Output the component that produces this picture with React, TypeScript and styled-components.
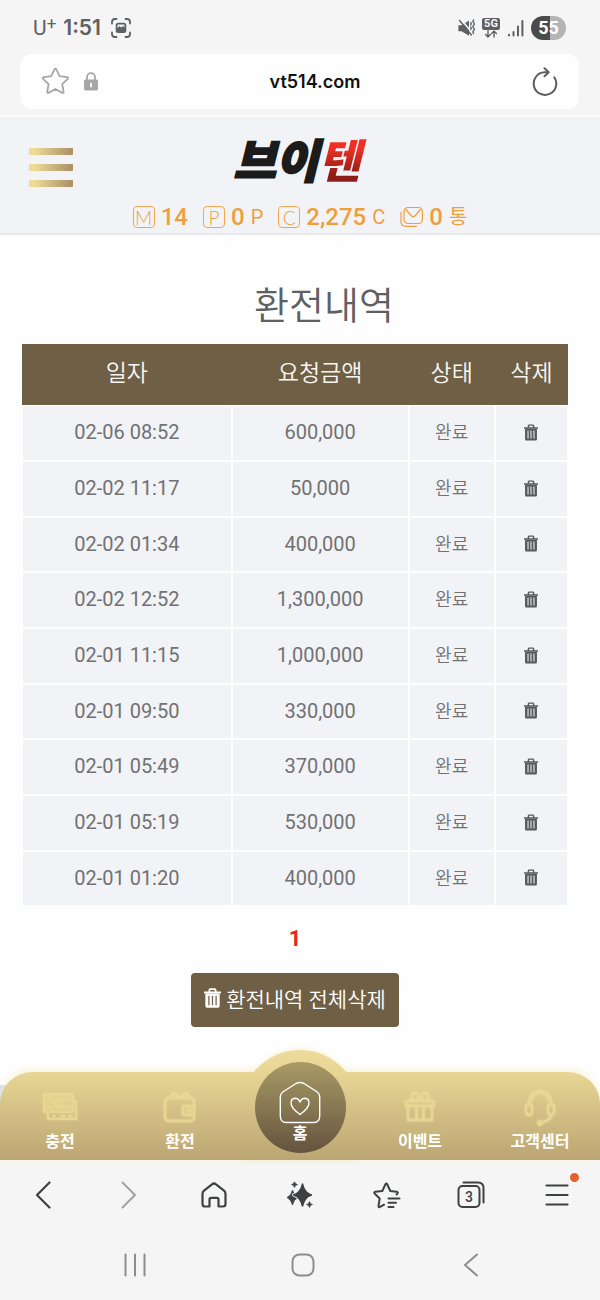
import React from "react";
import styled, { createGlobalStyle, css } from "styled-components";

const sans = `Roboto, "Noto Sans CJK KR", sans-serif`;

const GlobalStyle = createGlobalStyle`
  *, *::before, *::after { box-sizing: border-box; }
  body { margin: 0; background: #f5f5f5; font-family: ${sans}; color: #707173; }
  button { padding: 0; border: 0; background: none; font: inherit; color: inherit; cursor: pointer; }
  a { color: inherit; text-decoration: none; }
  h1, p { margin: 0; }
  svg { display: block; }
`;

const Screen = styled.div`
  display: flex;
  flex-direction: column;
  min-height: 100vh;
`;

/* ---------- phone status bar ---------- */

const StatusBar = styled.div`
  display: flex;
  align-items: center;
  justify-content: space-between;
  height: 54px;
  padding: 2px 34px 0 33px;
  color: #5f6062;
`;

const StatusGroup = styled.div<{ $gap: number }>`
  display: flex;
  align-items: center;
  gap: ${(p) => p.$gap}px;
`;

const Carrier = styled.span`
  display: flex;
  font: 400 21px/24px Roboto, sans-serif;
`;

const CarrierPlus = styled.span`
  font: 400 17px/14px Roboto, sans-serif;
`;

const Clock = styled.time`
  margin-right: 3px;
  font: 600 21px/24px Inter, sans-serif;
`;

const Battery = styled.span`
  display: grid;
  place-items: center;
  width: 35px;
  height: 24px;
  border-radius: 12px;
  background: linear-gradient(90deg, #4b4b4b 55%, #b4b4b4 55%);
  color: #fff;
  font: 700 18px/24px Roboto, sans-serif;
`;

/* ---------- address bar ---------- */

const AddressBar = styled.div`
  display: flex;
  align-items: center;
  height: 55px;
  margin: 0 21px 6px 20px;
  padding: 0 21px;
  border-radius: 12px;
  background: #fefefe;
`;

const AddressTools = styled.div`
  display: flex;
  align-items: center;
  gap: 14px;
  color: #a6a6a8;
`;

const Url = styled.span`
  flex: 1;
  color: #111;
  font: 600 18px/24px Inter, sans-serif;
  text-align: center;
`;

/* ---------- site header ---------- */

const SiteHeader = styled.header`
  padding: 20px 29px 2px;
  border-top: 2px solid #fbfbfb;
  border-bottom: 2px solid #e9eaec;
  background: #f2f3f6;
`;

const Brand = styled.div`
  display: grid;
  grid-template-columns: 1fr auto 1fr;
  align-items: start;
  height: 66px;
`;

const MenuButton = styled.button`
  display: flex;
  flex-direction: column;
  gap: 9px;
  width: 44px;
  margin-top: 11px;
`;

const MenuBar = styled.span`
  height: 7px;
  border-radius: 1px;
  background: linear-gradient(90deg, #efdb98 10%, #a98f66);
`;

const Logo = styled.a`
  padding-right: 6px;
  color: #1b1b1b;
  font: italic 900 46px/42px "Noto Sans CJK KR", sans-serif;
  -webkit-text-stroke: 2px #1b1b1b;
`;

const LogoAccent = styled.span`
  padding-right: 10px;
  margin-right: -10px;
  background: linear-gradient(#ee3124 35%, #8f1d17 75%);
  background-clip: text;
  color: transparent;
  -webkit-text-stroke: 0;
`;

const Stats = styled.ul`
  display: flex;
  justify-content: center;
  gap: 15px;
  margin: 0;
  padding: 0;
  list-style: none;
  color: #ee9f3c;
`;

const Stat = styled.li`
  display: flex;
  align-items: center;
  gap: 6px;
  height: 28px;
`;

const Badge = styled.span`
  width: 22px;
  height: 22px;
  border: 1px solid #f0a850;
  border-radius: 4px;
  font: 300 19px/21px Lato, sans-serif;
  text-align: center;
`;

const StatValue = styled.b`
  font-size: 24px;
  font-weight: 500;
  line-height: 28px;
`;

const StatUnit = styled.span`
  font-size: 20px;
  line-height: 28px;
`;

/* ---------- withdrawal history ---------- */

const Main = styled.main`
  display: flex;
  flex: 1;
  flex-direction: column;
  align-items: center;
  padding: 43px 32px 45px 22px;
  background: #fefefe;
`;

const Title = styled.h1`
  padding-left: 58px;
  color: #5f6062;
  font-size: 38px;
  font-weight: 350;
  line-height: 56px;
`;

const History = styled.table`
  width: 100%;
  margin-top: 10px;
  border-collapse: separate;
  border-spacing: 0;
  table-layout: fixed;
`;

const Col = styled.col<{ $share: number }>`
  width: ${(p) => p.$share}%;
`;

const HeadCell = styled.th`
  height: 61px;
  padding: 0 0 8px;
  background: #6f5f45;
  color: #f8f6f2;
  font-size: 23px;
  font-weight: 350;
`;

const Row = styled.tr`
  height: 56px;
  &:nth-child(3n) { height: 55px; }
`;

const Cell = styled.td<{ $small?: boolean }>`
  padding: ${(p) => (p.$small ? 0 : "0 0 2px")};
  border: 1px solid #fefefe;
  background: #f2f3f6;
  font-size: ${(p) => (p.$small ? 18 : 20)}px;
  font-weight: ${(p) => (p.$small ? 350 : 400)};
  line-height: 24px;
  text-align: center;
`;

const RowDelete = styled.button`
  display: block;
  margin: 0 auto;
  color: #58595b;
`;

const Pager = styled.nav`
  margin-top: 19px;
  color: #e8281e;
  font-size: 22px;
  font-weight: 700;
  line-height: 28px;
`;

const DeleteAll = styled.button`
  display: flex;
  align-items: center;
  gap: 5px;
  height: 54px;
  margin-top: 20px;
  padding: 0 13px 4px;
  border-radius: 4px;
  background: #6f5f45;
  color: #fff;
  font-size: 21px;
  font-weight: 350;
`;

/* ---------- site tab bar ---------- */

const barCorners = "32px 32px 0 0";

const TabArea = styled.div`
  position: relative;
  z-index: 0;
  background: linear-gradient(#cddbe3, #cddbe3) 0 13px / 24px 100% no-repeat, #fefefe;

  &::before {
    content: "";
    position: absolute;
    z-index: -2;
    inset: 0;
    border-radius: ${barCorners};
    box-shadow: 0 -2px 8px #f8f1d8;
  }
`;

const Bulge = styled.div`
  position: absolute;
  z-index: -1;
  top: -22px;
  left: 50%;
  width: 118px;
  height: 110px;
  margin-left: -59px;
  border-radius: 59px 59px 0 0;
  background: linear-gradient(#eedb9b, #e8d695 22px);
  box-shadow: 0 0 6px #f6edcb;
`;

const TabBar = styled.nav`
  display: grid;
  grid-template-columns: repeat(5, 1fr);
  height: 88px;
  border-radius: ${barCorners};
  background: linear-gradient(#e8d695, #bba573);
`;

const Tab = styled.a`
  display: flex;
  flex-direction: column;
  align-items: center;
  gap: 4px;
  padding-top: 16px;
  color: #fff;
  font-size: 16px;
  font-weight: 700;
  line-height: 24px;
`;

const TabIcon = styled.span`
  display: grid;
  place-items: center;
  height: 38px;
  color: #ebda96;
  filter: drop-shadow(0 0 1px #ebda96);
  opacity: 0.85;
`;

const HomeTab = styled.a`
  justify-self: center;
  display: flex;
  flex-direction: column;
  align-items: center;
  width: 91px;
  height: 91px;
  margin-top: -10px;
  padding-top: 19px;
  border-radius: 50%;
  background: linear-gradient(#a99b66, #65533e);
  color: #fff;
  font-size: 16px;
  font-weight: 700;
  line-height: 18px;
`;

/* ---------- browser and system bars ---------- */

const barItem = css`
  display: grid;
  place-items: center;
`;

const BrowserBar = styled.div`
  display: grid;
  grid-template-columns: repeat(7, 1fr);
  height: 70px;
  color: #3f4042;
`;

const BrowserButton = styled.button<{ $dim?: boolean }>`
  ${barItem}
  color: ${(p) => (p.$dim ? "#a2a2a3" : "inherit")};
`;

const SystemBar = styled.div`
  display: grid;
  grid-template-columns: repeat(3, 1fr);
  height: 70px;
  padding: 0 45px 0 51px;
  color: #8d8d8e;
`;

const SystemButton = styled.button`
  ${barItem}
`;

/* ---------- icons ---------- */

type IconProps = { w: number; h: number; sw?: number; children: React.ReactNode };

const Icon = ({ w, h, sw = 2, children }: IconProps) => (
  <svg
    width={w}
    height={h}
    viewBox={`0 0 ${w} ${h}`}
    fill="none"
    stroke="currentColor"
    strokeWidth={sw}
    strokeLinecap="round"
    strokeLinejoin="round"
    aria-hidden="true"
  >
    {children}
  </svg>
);

const Trash = ({ size }: { size: number }) => (
  <svg width={size} height={size + 3} viewBox="0 0 16 19" fill="currentColor" aria-hidden="true">
    <path d="M4.200 3.400V2Q4.200 .3 5.900 .3h4.200q1.700 0 1.700 1.700v1.400H16v1.900H0V3.400zM5.900 3.400h4.200V1.900H5.900z" fillRule="evenodd" />
    <path
      d="M1.200 5.300h13.600v11.900q0 1.500-1.500 1.500H2.700q-1.500 0-1.500-1.500zM4 7.300v9h1.200v-9zM7.400 7.300v9h1.200v-9zM10.800 7.300v9H12v-9z"
      fillRule="evenodd"
    />
  </svg>
);

const CaptureIcon = () => (
  <Icon w={20} h={20} sw={1.8}>
    <path d="M1 5.500V4q0-3 3-3h1.500M14.500 1H16q3 0 3 3v1.500M19 14.500V16q0 3-3 3h-1.500M5.500 19H4q-3 0-3-3v-1.500" />
    <rect x="5.600" y="5.600" width="8.800" height="8.600" rx="1.600" />
    <path d="M6 10.500l2.500-2.500 1.600 1.500 2-1.500 2.300 2.200V14H6z" fill="currentColor" stroke="none" />
  </Icon>
);

const MuteIcon = () => (
  <Icon w={17} h={18} sw={1.4}>
    <path d="M.4 6.200h3.200L11 1.500V16.800l-7.400-4.600H.4z" fill="currentColor" stroke="none" />
    <path d="M3.500 1l10 12" stroke="#f5f5f5" strokeWidth="1.600" />
    <path d="M1.500 1.500L13.500 16" />
    <path d="M12.800 3.500q1 1.200 0 2.400M15.600 1q-1.400 1.300 0 2.600t0 2.700 0 2.700 0 2.700 0 2.700M12.800 8q1 1.200 0 2.400" />
  </Icon>
);

const FiveG = styled.span`
  display: flex;
  flex-direction: column;
  align-items: center;
  width: 18px;
`;

const FiveGLabel = styled.span`
  width: 18px;
  border-radius: 2px;
  background: #5f6062;
  color: #f5f5f5;
  font: 700 11px/12px Roboto, sans-serif;
  text-align: center;
`;

const SignalIcon = () => (
  <Icon w={17} h={18}>
    <path d="M2 16.400v-.6M6.500 16.400v-3.400" />
    <path d="M11 16.400V7.500" />
    <path d="M15.400 16.400V2" />
  </Icon>
);

const StarIcon = () => (
  <Icon w={29} h={29} sw={1.8}>
    <path d="M13.400 2.600q1-2 2 0l3.200 6.600 7.300 1q2.100.4.6 2l-5.300 5 1.300 7.300q.3 2.100-1.600 1.100L14.400 22l-6.500 3.600q-1.900 1-1.600-1.100l1.300-7.300-5.300-5q-1.500-1.600.6-2l7.300-1z" />
  </Icon>
);

const LockIcon = () => (
  <Icon w={14} h={19} sw={1.8}>
    <path d="M3 8V5.200a4 4 0 0 1 8 0V8" />
    <rect x="0" y="7.600" width="14" height="10.800" rx="1.600" fill="currentColor" stroke="none" />
    <path d="M7 11.600v3" stroke="#fefefe" />
  </Icon>
);

const ReloadIcon = () => (
  <Icon w={26} h={30} sw={2}>
    <path d="M16 5.300H12.500A11.300 11.300 0 1 0 22.300 10.200" stroke="#5c5d5f" />
    <path d="M12.500 1.300l4.200 4-4.200 4" stroke="#5c5d5f" />
  </Icon>
);

const MailIcon = () => (
  <Icon w={23} h={22} sw={1.2}>
    <rect x="4" y="1.500" width="18.400" height="16" rx="4" />
    <path d="M6 3.500l5 6q2.200 2.200 4.400 0l5-6" />
    <path d="M1 6v9.500q0 4.800 4.800 4.800h10.700" />
  </Icon>
);

const CashIcon = () => (
  <Icon w={36} h={28} sw={2}>
    <rect x="2" y="1" width="29" height="18" rx="1" fill="currentColor" fillOpacity=".35" />
    <path d="M5 7q3-.5 4-3M24 4q1 2.500 4 3M5 13q3 .5 4 3M24 16q1-2.500 4-3M31 8h3v18H6v-7" />
    <circle cx="16.500" cy="10" r="4.500" />
    <path d="M16.500 8v4M11 23h2M19 23h4M27 23h3" />
  </Icon>
);

const WalletIcon = () => (
  <Icon w={34} h={32} sw={2.4}>
    <rect x="2" y="7" width="29" height="23" rx="4" />
    <path d="M7 6l4-4 6 4 6-4 4 4" />
    <path d="M31 15H21q-1 0-1 1v7q0 1 1 1h10" />
    <rect x="24" y="18" width="4" height="3" strokeWidth="1.500" />
  </Icon>
);

const GiftIcon = () => (
  <Icon w={32} h={32} sw={2.4}>
    <rect x="2" y="10" width="28" height="5" />
    <path d="M4 15v14h24V15M12.500 15v14M19.500 15v14" />
    <circle cx="11" cy="5.500" r="3.600" />
    <circle cx="21" cy="5.500" r="3.600" />
  </Icon>
);

const HeadsetIcon = () => (
  <Icon w={32} h={38} sw={2.4}>
    <path d="M5 16v-2a11 11 0 0 1 22 0v2" />
    <path d="M8 13a8 8 0 0 1 16 0" strokeWidth="1.500" />
    <rect x="2" y="16" width="6" height="11" rx="3" />
    <rect x="24" y="16" width="6" height="11" rx="3" />
    <path d="M27 27q0 5-9 7.500" />
    <circle cx="16" cy="35" r="1.800" fill="currentColor" />
  </Icon>
);

const HomeHeartIcon = () => (
  <Icon w={44} h={44} sw={1.4}>
    <path d="M18 2.500q4-2 8 0l12.500 8q3.200 2 3.200 6V35q0 6.500-6 6.500H8.300q-6 0-6-6.500V16.500q0-4 3.200-6z" />
    <path d="M22 33.500q-9-6.500-9-11.500 0-4.500 4-4.800 3.500 0 5 3.800 1.500-3.800 5-3.800 4 .3 4 4.800 0 5-9 11.500z" />
  </Icon>
);

const SparkleIcon = () => (
  <svg width="28" height="28" viewBox="0 0 28 28" fill="currentColor" strokeLinejoin="round" aria-hidden="true">
    <path d="M6.500 9Q7.500 14.500 12 16.500 7.500 18.500 6.500 24 5.200 18.500 1 16.500 5.500 14.500 6.500 9z" stroke="currentColor" strokeWidth=".8" />
    <path d="M16.500 3Q18.500 12 25.500 14 18.500 16 16.500 25 14.500 16 7.500 14 14.500 12 16.500 3z" stroke="#f5f5f5" strokeWidth="3" />
    <path d="M16.500 3Q18.500 12 25.500 14 18.500 16 16.500 25 14.500 16 7.500 14 14.500 12 16.500 3z" stroke="currentColor" strokeWidth="1.400" />
    <path d="M8.500 .8Q9 3 11.500 3.600 9 4.200 8.500 6.600 8 4.200 5.500 3.600 8 3 8.500 .8zM23.500 20.500Q24 23 26.500 23.500 24 24 23.500 26.500 23 24 20.500 23.500 23 23 23.500 20.500z" stroke="currentColor" strokeWidth=".6" />
  </svg>
);

const BookmarksIcon = () => (
  <Icon w={30} h={28} sw={2}>
    <path d="M25.500 13.500l.8-.8q1.300-1.500-.7-1.900l-6.300-.8-3-6.500q-1-1.800-2 0l-3 6.500-6.900.8q-2 .4-.6 1.900l4.900 4.800-1.200 7.300q-.2 2 1.600 1.100l4-2.200" />
    <path d="M17.500 17.500h11M17.500 21.800h7.500M17.500 26h5" />
  </Icon>
);

const TabsIcon = () => (
  <svg width="28" height="28" viewBox="0 0 28 28" fill="none" stroke="currentColor" strokeWidth="2" aria-hidden="true">
    <rect x="1.500" y="5" width="21" height="21" rx="4" />
    <path d="M6.500 1.500H21q5.500 0 5.500 5.500v14.500" strokeLinecap="round" />
    <text x="12" y="20.500" textAnchor="middle" fill="currentColor" stroke="none" fontFamily="Roboto, sans-serif" fontWeight="500" fontSize="14">
      3
    </text>
  </svg>
);

const MenuIconBox = styled.span`
  position: relative;
`;

const NoticeDot = styled.span`
  position: absolute;
  top: -11px;
  right: -10px;
  width: 9px;
  height: 9px;
  border-radius: 50%;
  background: #e0642c;
`;

/* ---------- data ---------- */

const withdrawals = [
  ["02-06 08:52", "600,000"],
  ["02-02 11:17", "50,000"],
  ["02-02 01:34", "400,000"],
  ["02-02 12:52", "1,300,000"],
  ["02-01 11:15", "1,000,000"],
  ["02-01 09:50", "330,000"],
  ["02-01 05:49", "370,000"],
  ["02-01 05:19", "530,000"],
  ["02-01 01:20", "400,000"],
];

export default function App() {
  return (
    <Screen>
      <GlobalStyle />
      <StatusBar>
        <StatusGroup $gap={7}>
          <Carrier>
            U<CarrierPlus>+</CarrierPlus>
          </Carrier>
          <Clock>1:51</Clock>
          <CaptureIcon />
        </StatusGroup>
        <StatusGroup $gap={7}>
          <MuteIcon />
          <FiveG>
            <FiveGLabel>5G</FiveGLabel>
            <Icon w={14} h={8} sw={1.4}>
              <path d="M4 .7v6M1.600 4.600L4 7l2.400-2.400M10 7V1M7.600 3.400L10 1l2.400 2.400" />
            </Icon>
          </FiveG>
          <SignalIcon />
          <Battery>55</Battery>
        </StatusGroup>
      </StatusBar>

      <AddressBar>
        <AddressTools>
          <button aria-label="Add bookmark"><StarIcon /></button>
          <LockIcon />
        </AddressTools>
        <Url>vt514.com</Url>
        <AddressTools>
          <button aria-label="Reload"><ReloadIcon /></button>
        </AddressTools>
      </AddressBar>

      <SiteHeader>
        <Brand>
          <MenuButton aria-label="메뉴">
            <MenuBar />
            <MenuBar />
            <MenuBar />
          </MenuButton>
          <Logo href="#">
            브이<LogoAccent>텐</LogoAccent>
          </Logo>
        </Brand>
        <Stats>
          <Stat><Badge>M</Badge><StatValue>14</StatValue></Stat>
          <Stat><Badge>P</Badge><StatValue>0</StatValue><StatUnit>P</StatUnit></Stat>
          <Stat><Badge>C</Badge><StatValue>2,275</StatValue><StatUnit>C</StatUnit></Stat>
          <Stat><MailIcon /><StatValue>0</StatValue><StatUnit>통</StatUnit></Stat>
        </Stats>
      </SiteHeader>

      <Main>
        <Title>환전내역</Title>
        <History>
          <colgroup>
            <Col $share={38.4} />
            <Col $share={32.4} />
            <Col $share={15.8} />
            <Col $share={13.4} />
          </colgroup>
          <thead>
            <tr>
              <HeadCell scope="col">일자</HeadCell>
              <HeadCell scope="col">요청금액</HeadCell>
              <HeadCell scope="col">상태</HeadCell>
              <HeadCell scope="col">삭제</HeadCell>
            </tr>
          </thead>
          <tbody>
            {withdrawals.map(([date, amount]) => (
              <Row key={date}>
                <Cell>{date}</Cell>
                <Cell>{amount}</Cell>
                <Cell $small>완료</Cell>
                <Cell>
                  <RowDelete aria-label="삭제"><Trash size={14} /></RowDelete>
                </Cell>
              </Row>
            ))}
          </tbody>
        </History>
        <Pager>
          <a href="#" aria-current="page">1</a>
        </Pager>
        <DeleteAll>
          <Trash size={17} />
          환전내역 전체삭제
        </DeleteAll>
      </Main>

      <TabArea>
        <Bulge />
        <TabBar>
          <Tab href="#"><TabIcon><CashIcon /></TabIcon>충전</Tab>
          <Tab href="#"><TabIcon><WalletIcon /></TabIcon>환전</Tab>
          <HomeTab href="#"><HomeHeartIcon />홈</HomeTab>
          <Tab href="#"><TabIcon><GiftIcon /></TabIcon>이벤트</Tab>
          <Tab href="#"><TabIcon><HeadsetIcon /></TabIcon>고객센터</Tab>
        </TabBar>
      </TabArea>

      <BrowserBar>
        <BrowserButton aria-label="Back">
          <Icon w={16} h={28} sw={2.2}><path d="M14.500 1.500L2 14l12.500 12.500" /></Icon>
        </BrowserButton>
        <BrowserButton aria-label="Forward" $dim>
          <Icon w={16} h={28} sw={2}><path d="M1.500 1.500L14 14 1.500 26.500" /></Icon>
        </BrowserButton>
        <BrowserButton aria-label="Home">
          <Icon w={26} h={28} sw={2.2}>
            <path d="M11.300 3.200q1.700-1.400 3.400 0l8.300 6.500q1.500 1.200 1.500 3.200V23q0 2.500-2.500 2.500h-4.500v-7q0-1.700-1.700-1.700h-5.600q-1.700 0-1.700 1.700v7H4q-2.500 0-2.500-2.500V12.900q0-2 1.500-3.200z" />
          </Icon>
        </BrowserButton>
        <BrowserButton aria-label="Assist"><SparkleIcon /></BrowserButton>
        <BrowserButton aria-label="Bookmarks"><BookmarksIcon /></BrowserButton>
        <BrowserButton aria-label="Tabs"><TabsIcon /></BrowserButton>
        <BrowserButton aria-label="Menu">
          <MenuIconBox>
            <Icon w={24} h={22} sw={2.2}><path d="M1.500 1.500h21M1.500 11h21M1.500 20.500h21" /></Icon>
            <NoticeDot />
          </MenuIconBox>
        </BrowserButton>
      </BrowserBar>

      <SystemBar>
        <SystemButton aria-label="Recent apps">
          <Icon w={22} h={24} sw={2}><path d="M1.500 1.500v21M11 1.500v21M20.500 1.500v21" /></Icon>
        </SystemButton>
        <SystemButton aria-label="Home screen">
          <Icon w={24} h={24} sw={2}><rect x="1.500" y="1.500" width="21" height="21" rx="7" /></Icon>
        </SystemButton>
        <SystemButton aria-label="System back">
          <Icon w={16} h={24} sw={2}><path d="M14 1.500L2 12l12 10.500" /></Icon>
        </SystemButton>
      </SystemBar>
    </Screen>
  );
}
